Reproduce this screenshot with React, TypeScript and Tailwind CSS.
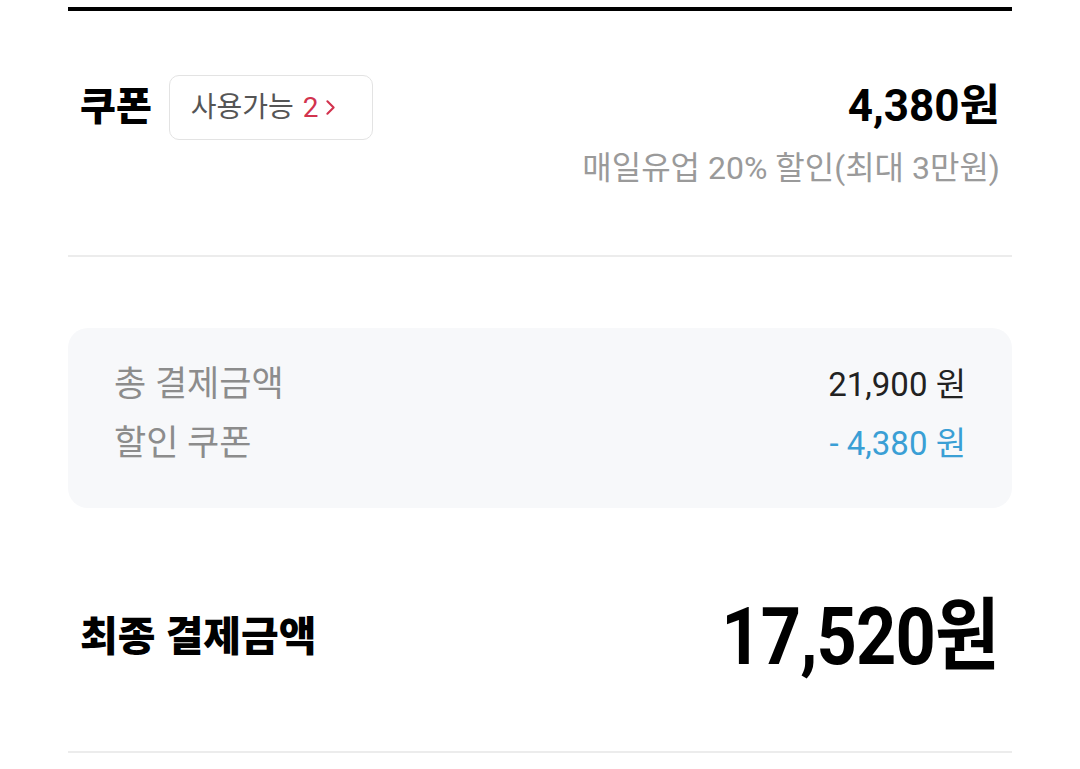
import { ChevronRight } from 'lucide-react';

const font = { fontFamily: "Roboto, 'Noto Sans CJK KR', sans-serif" };

export default function App() {
  return (
    <div className="min-h-screen bg-white" style={font}>
      <div className="mx-[68px]">
        {/* Top bar */}
        <div className="mt-[7px] h-[4px] bg-black" />

        {/* Coupon */}
        <div className="flex justify-between px-[12px] pt-[64px] pb-[66px]">
          <div className="flex items-start gap-[17px]">
            <span className="text-[39px] font-extrabold leading-[65px] text-black">쿠폰</span>
            <button className="flex h-[65px] items-center rounded-[10px] border-[1.5px] border-[#e3e3e3] pl-[21px] pr-[29px] text-[28px] text-[#555]">
              사용가능
              <span className="ml-[9px] flex items-center text-[#d2334e]">
                2
                <ChevronRight className="h-[25px] w-[25px] -ml-[1px]" strokeWidth={2} />
              </span>
            </button>
          </div>
          <div className="flex flex-col items-end">
            <span className="mt-[3px] text-[44px] font-bold leading-[56px] text-black">4,380원</span>
            <span className="mt-[13px] text-[32px] leading-[42px] text-[#9a9a9a]">
              매일유업 20% 할인(최대 3만원)
            </span>
          </div>
        </div>

        <div className="h-[2px] bg-[#ececec]" />

        {/* Summary */}
        <div className="mt-[71px] rounded-[20px] bg-[#f7f8fa] px-[46px] pt-[35px] pb-[42px]">
          <div className="flex items-center justify-between">
            <span className="text-[35px] leading-[44px] text-[#8c8c8c]">총 결제금액</span>
            <span className="text-[33px] leading-[44px] text-[#222]">21,900 원</span>
          </div>
          <div className="mt-[15px] flex items-center justify-between">
            <span className="text-[35px] leading-[44px] text-[#8c8c8c]">할인 쿠폰</span>
            <span className="text-[33px] leading-[44px] text-[#3a9fd5]">- 4,380 원</span>
          </div>
        </div>

        {/* Final */}
        <div className="flex items-center justify-between pl-[12px] pr-[13px] pt-[89px] pb-[74px]">
          <span className="text-[41px] font-extrabold leading-[56px] text-black">최종 결제금액</span>
          <span className="inline-block origin-right scale-x-[0.89] text-[79px] font-bold leading-[80px] tracking-[-1px] text-black">
            17,520원
          </span>
        </div>

        <div className="h-[2px] bg-[#ececec]" />
      </div>
    </div>
  );
}
